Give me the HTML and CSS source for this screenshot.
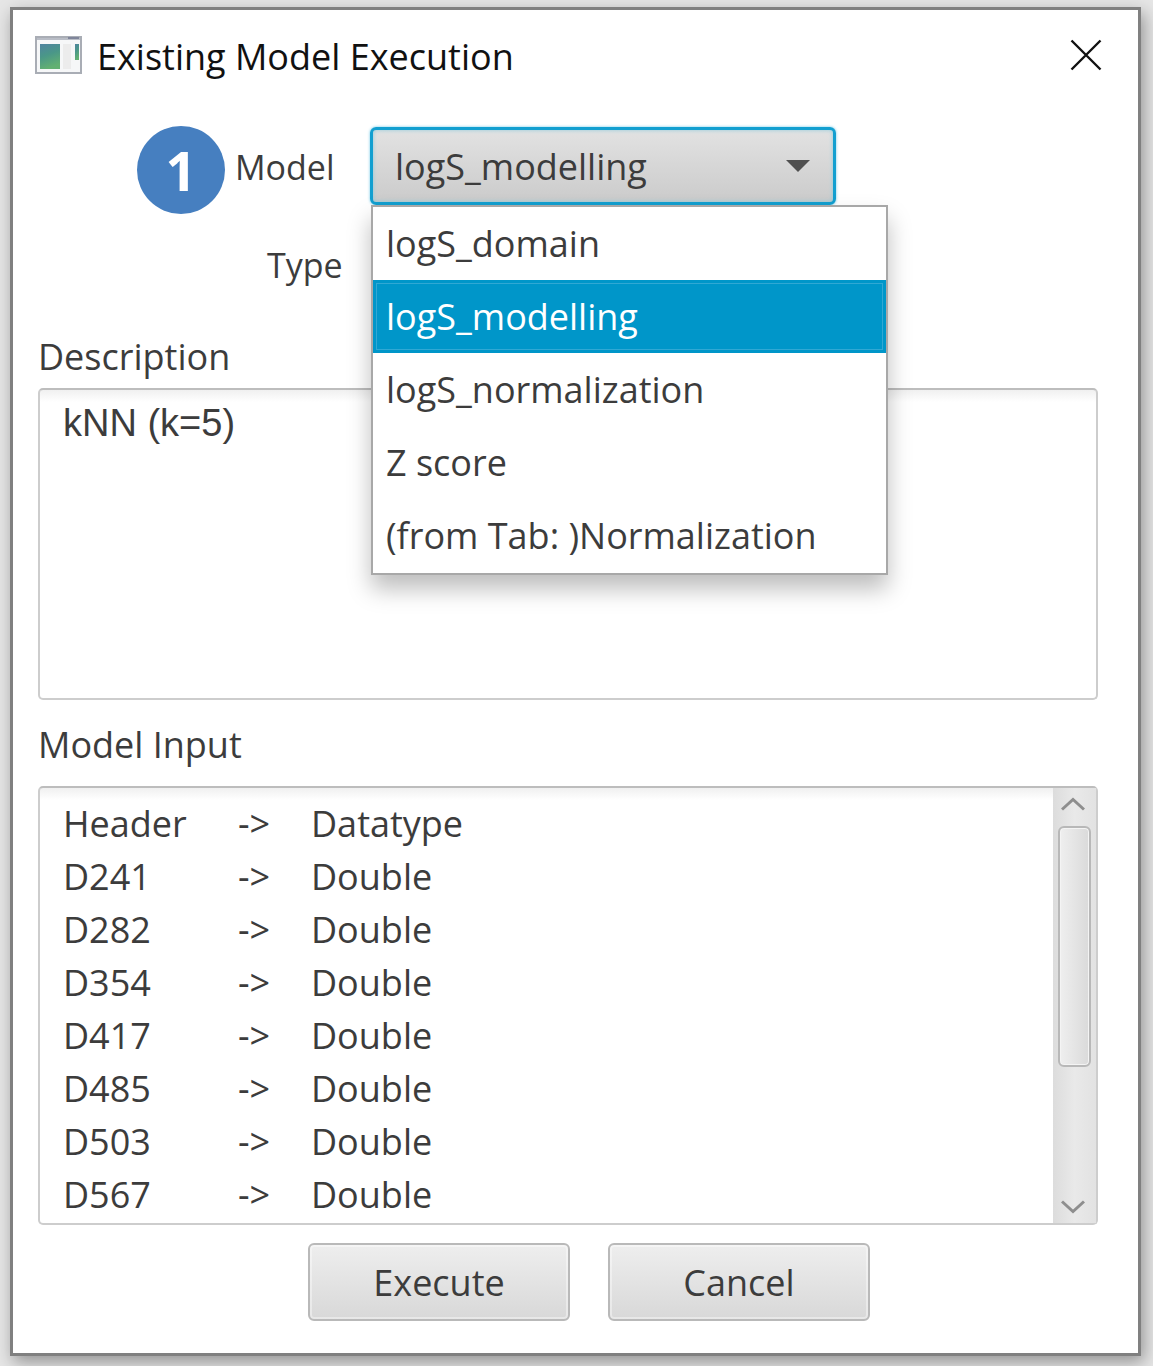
FILE: index.html
```html
<!DOCTYPE html>
<html lang="en">
<head>
<meta charset="utf-8">
<title>Existing Model Execution</title>
<link rel="stylesheet" href="styles.css">
</head>
<body>
<div class="desktop">
  <main class="window">
    <header class="titlebar">
      <svg class="app-icon" viewBox="0 0 48 40" aria-hidden="true">
        <defs>
          <linearGradient id="pane" x1="0" y1="0" x2="0.3" y2="1">
            <stop offset="0" stop-color="#4f83a0"/>
            <stop offset="0.5" stop-color="#4a9788"/>
            <stop offset="1" stop-color="#62b072"/>
          </linearGradient>
        </defs>
        <rect x="1" y="0" width="45" height="36" fill="#f6f7f8" stroke="#a9adb5" stroke-width="2"/>
        <path d="M2 2h43" stroke="#b9bdc6" stroke-width="2"/>
        <path d="M33 1h11" stroke="#7f859a" stroke-width="2"/>
        <rect x="5" y="7" width="20" height="25" fill="url(#pane)"/>
        <rect x="28" y="7" width="8" height="25" fill="#ececec"/>
        <rect x="40" y="7" width="4" height="16" fill="url(#pane)"/>
      </svg>
      <h1 class="title">Existing Model Execution</h1>
      <button class="close" type="button" aria-label="Close">
        <svg viewBox="0 0 32 32" aria-hidden="true"><path d="M1.500 1.500l29 29M30.500 1.500l-29 29" stroke="#111" stroke-width="2.400" fill="none"/></svg>
      </button>
    </header>

    <form class="content">
      <div class="row">
        <span class="step">1</span>
        <label class="row-label" for="model">Model</label>
        <div class="combo">
          <select class="combo-box" id="model">
            <option>logS_domain</option>
            <option selected>logS_modelling</option>
            <option>logS_normalization</option>
            <option>Z score</option>
            <option>(from Tab: )Normalization</option>
          </select>
          <svg class="combo-arrow" viewBox="0 0 24 12" aria-hidden="true"><path d="M0 0h24l-12 12z" fill="#505050"/></svg>
          <ul class="popup" role="listbox" aria-label="Model">
            <li class="option" role="option">logS_domain</li>
            <li class="option selected" role="option" aria-selected="true">logS_modelling</li>
            <li class="option" role="option">logS_normalization</li>
            <li class="option" role="option">Z score</li>
            <li class="option" role="option">(from Tab: )Normalization</li>
          </ul>
        </div>
      </div>
      <div class="row type-row"><span class="row-label">Type</span></div>

      <label class="caption" for="description">Description</label>
      <textarea class="field description" id="description">kNN (k=5)</textarea>

      <h2 class="caption input-caption">Model Input</h2>
      <div class="field list">
        <table class="types">
          <thead><tr><th>Header</th><th>-&gt;</th><th>Datatype</th></tr></thead>
          <tbody>
            <tr><td>D241</td><td>-&gt;</td><td>Double</td></tr>
            <tr><td>D282</td><td>-&gt;</td><td>Double</td></tr>
            <tr><td>D354</td><td>-&gt;</td><td>Double</td></tr>
            <tr><td>D417</td><td>-&gt;</td><td>Double</td></tr>
            <tr><td>D485</td><td>-&gt;</td><td>Double</td></tr>
            <tr><td>D503</td><td>-&gt;</td><td>Double</td></tr>
            <tr><td>D567</td><td>-&gt;</td><td>Double</td></tr>
          </tbody>
        </table>
        <div class="scrollbar">
          <button class="scroll-button" type="button" aria-label="Scroll up"><svg viewBox="0 0 24 14" aria-hidden="true"><path d="M1 12.500l11-10 11 10" fill="none" stroke="#8e8e8e" stroke-width="3"/></svg></button>
          <div class="track"><div class="thumb"></div></div>
          <button class="scroll-button scroll-down" type="button" aria-label="Scroll down"><svg viewBox="0 0 24 14" aria-hidden="true"><path d="M1 1.500l11 10 11-10" fill="none" stroke="#8e8e8e" stroke-width="3"/></svg></button>
        </div>
      </div>

      <div class="actions">
        <button class="button" type="button">Execute</button>
        <button class="button" type="button">Cancel</button>
      </div>
    </form>
  </main>
</div>
</body>
</html>
```
FILE: styles.css
```css
* { box-sizing: border-box; }

body {
  margin: 0;
  background: #fff;
  color: #3c3c3c;
  font: 36px/52px "Open Sans", "Noto Sans", sans-serif;
}

button, select, textarea { font: inherit; color: inherit; }
h1, h2, ul { margin: 0; padding: 0; font: inherit; }
svg { display: block; }

.desktop {
  margin: 0 3px 3px 0;
  padding: 7px 12px 10px 10px;
  background: #e6e6e6;
  overflow: hidden;
}

.window {
  border: 3px solid #808080;
  background: #fff;
  box-shadow: 3px 6px 16px rgba(0, 0, 0, 0.36);
}

.titlebar {
  display: flex;
  align-items: center;
  height: 94px;
  padding: 0 36px 0 22px;
}
.app-icon { width: 48px; height: 40px; overflow: visible; }
.title { flex: 1; margin-left: 14px; color: #111; }
.close { margin-bottom: 4px; padding: 0; border: 0; background: none; }
.close svg { width: 32px; height: 32px; }

.content { padding: 23px 40px 32px 25px; }

.row { display: flex; align-items: center; height: 78px; }
.row-label { padding-top: 2px; font-size: 34px; }
.step {
  width: 88px;
  height: 88px;
  margin: 8px 10px 0 99px;
  border-radius: 50%;
  background: #467fc0;
  color: #fff;
  font: bold 54px/88px "Open Sans", sans-serif;
  text-align: center;
}
.row .row-label { flex: none; width: 135px; }

.combo { position: relative; flex: 0 1 466px; }
.combo-box {
  display: block;
  width: 100%;
  height: 78px;
  padding: 2px 70px 0 22px;
  appearance: none;
  border: 3px solid #129fd0;
  border-radius: 6px;
  background: linear-gradient(#e2e2e2, #cbcbcb);
  box-shadow: 0 0 3px #6cc7e6, inset 0 0 4px #8fcbdc;
}
.combo-arrow {
  position: absolute;
  top: 33px;
  right: 26px;
  width: 24px;
  height: 12px;
  pointer-events: none;
}
.popup {
  position: absolute;
  z-index: 1;
  top: 100%;
  left: 1px;
  width: 517px;
  padding-bottom: 1px;
  border: 2px solid #a8a8a8;
  background: #fff;
  box-shadow: 0 14px 22px rgba(0, 0, 0, 0.26);
  list-style: none;
}
.option { padding: 0 13px; line-height: 73px; white-space: nowrap; }
.option.selected {
  background: #0096c9;
  color: #fff;
  box-shadow: inset 0 0 0 3px #0096c9, inset 0 0 0 4px #30a8d4;
}

.type-row { margin-top: 20px; padding-left: 229px; }

.caption { display: block; margin-top: 28px; }
.field {
  display: block;
  width: 100%;
  border: 2px solid #cdcdcd;
  border-top-color: #bdbdbd;
  border-radius: 5px;
  background: linear-gradient(#f0f0f0, #fff 12px);
}
.description {
  height: 312px;
  margin-top: 5px;
  padding: 7px 23px;
  resize: none;
  font-family: "Liberation Sans", sans-serif;
  font-size: 38px;
}
.input-caption { margin-top: 19px; }

.list { display: flex; justify-content: space-between; margin-top: 15px; }
.types {
  align-self: flex-start;
  margin: 9px 0 0 23px;
  border-collapse: collapse;
  line-height: 53px;
}
.types th, .types td { padding: 0; font-weight: inherit; text-align: left; }
.types th:nth-child(1) { width: 175px; }
.types th:nth-child(2) { width: 73px; }

.scrollbar {
  display: flex;
  flex-direction: column;
  width: 43px;
  min-height: 435px;
  padding: 0 5px;
  background: linear-gradient(90deg, #dcdcdc, #e9e9e9 50%, #e2e2e2);
}
.scroll-button { height: 38px; padding: 0 2px 6px; border: 0; background: none; }
.scroll-down { padding: 6px 2px 0; }
.scroll-button svg { width: 24px; height: 14px; margin-left: 1px; }
.track { flex: 1; }
.thumb {
  height: 67%;
  border: 2px solid #b8b8b8;
  border-radius: 6px;
  background: linear-gradient(90deg, #efefef, #dadada);
  box-shadow: inset 0 0 0 1px #f4f4f4;
}

.actions {
  display: flex;
  justify-content: center;
  gap: 38px;
  margin-top: 18px;
  padding-left: 42px;
}
.button {
  width: 262px;
  height: 78px;
  padding: 2px 0 0;
  border: 2px solid #b9b9b9;
  border-radius: 6px;
  background: linear-gradient(#eee, #d8d8d8);
  box-shadow: inset 0 0 0 2px rgba(255, 255, 255, 0.4);
}
```
